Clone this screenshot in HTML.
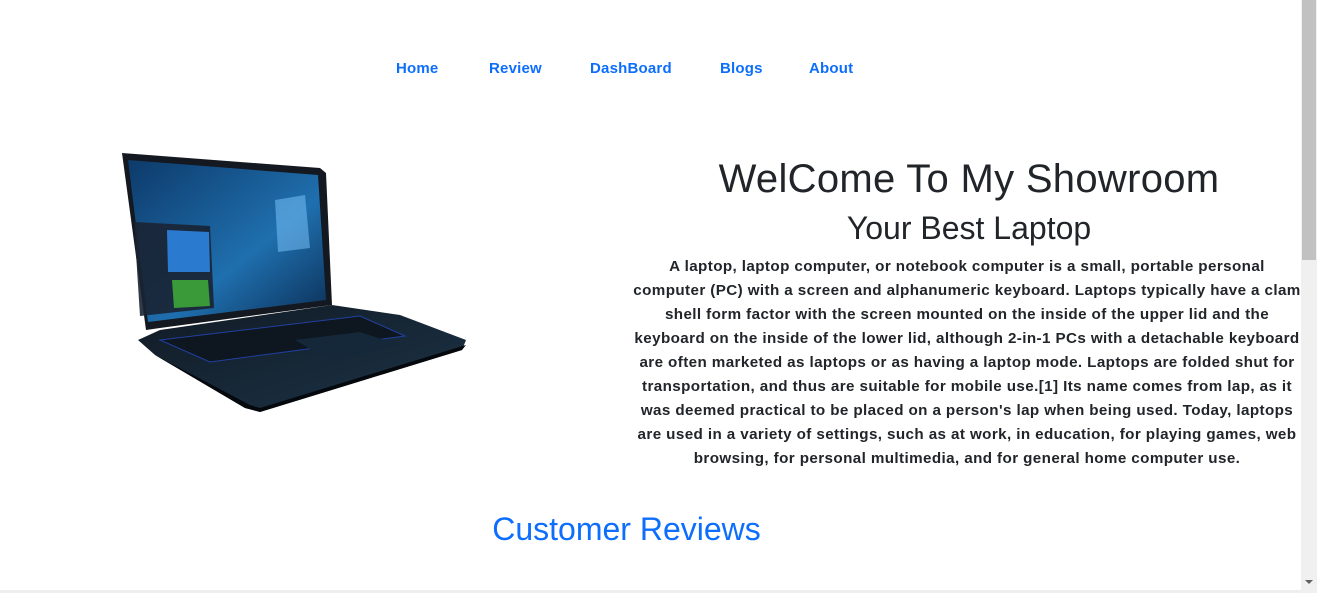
<!DOCTYPE html>
<html><head><style>
html,body{margin:0;padding:0;}
body{width:1317px;height:593px;overflow:hidden;background:#fff;font-family:"Liberation Sans",sans-serif;position:relative;}
.nav{position:absolute;top:60px;left:0;width:1301px;text-align:center;font-weight:bold;font-size:15px;letter-spacing:0.2px;}
.nav a{color:#0d6efd;text-decoration:none;position:absolute;top:0;}
h1{position:absolute;margin:0;left:640px;width:658px;text-align:center;top:157px;font-size:40px;font-weight:normal;color:#212529;letter-spacing:0.3px;}
h2{position:absolute;margin:0;left:640px;width:658px;text-align:center;top:210px;font-size:32px;font-weight:normal;color:#212529;}
p{position:absolute;margin:0;left:632px;width:670px;top:255px;text-align:center;font-weight:bold;font-size:15.2px;line-height:24px;color:#212529;letter-spacing:0.4px;}
.cr{position:absolute;left:0;width:1253px;text-align:center;top:511px;font-size:32px;color:#0d6efd;}
.sb{position:absolute;left:1301px;top:0;width:16px;height:593px;background:#f0f0f0;}
.th{position:absolute;left:1302px;top:0;width:14px;height:260px;background:#c1c1c1;}
.bb{position:absolute;left:0;top:590px;width:1301px;height:3px;background:#eee;}
</style></head><body>
<div class="nav">
<a style="left:396px">Home</a><a style="left:489px">Review</a><a style="left:590px">DashBoard</a><a style="left:720px">Blogs</a><a style="left:809px">About</a>
</div>
<svg style="position:absolute;left:100px;top:140px" width="400" height="290" viewBox="0 0 400 290">
<defs><linearGradient id="s" x1="0" y1="0" x2="1" y2="1"><stop offset="0" stop-color="#0d3a6a"/><stop offset="0.6" stop-color="#1f6fae"/><stop offset="1" stop-color="#0b2e55"/></linearGradient>
<linearGradient id="k" x1="0" y1="0" x2="1" y2="1"><stop offset="0" stop-color="#111a24"/><stop offset="1" stop-color="#1c3448"/></linearGradient></defs>
<polygon points="22,13 220,28 226,33 232,165 60,188 46,190" fill="#141820"/>
<polygon points="28,20 218,35 226,160 48,182" fill="url(#s)"/>
<polygon points="34,82 110,86 114,168 40,176" fill="#1a2433" opacity="0.9"/>
<polygon points="67,90 109,92 110,132 68,132" fill="#2a7ad0"/>
<polygon points="72,140 108,140 110,166 74,168" fill="#3a9a3a"/>
<polygon points="175,60 205,55 210,108 178,112" fill="#7fc8ff" opacity="0.5"/>
<polygon points="60,190 232,165 300,175 366,200 362,210 160,272 145,268 55,215 38,200" fill="url(#k)"/>
<polygon points="60,200 260,176 305,196 110,222" fill="#0e1620" stroke="#2040a0" stroke-width="1"/>
<polygon points="195,200 260,192 300,205 232,222" fill="#14283a"/>
<polygon points="55,215 145,268 160,272 362,210 366,205 160,268 150,265" fill="#05080c"/>
</svg>
<h1>WelCome To My Showroom</h1>
<h2>Your Best Laptop</h2>
<p>A laptop, laptop computer, or notebook computer is a small, portable personal computer (PC) with a screen and alphanumeric keyboard. Laptops typically have a clam shell form factor with the screen mounted on the inside of the upper lid and the keyboard on the inside of the lower lid, although 2-in-1 PCs with a detachable keyboard are often marketed as laptops or as having a laptop mode. Laptops are folded shut for transportation, and thus are suitable for mobile use.[1] Its name comes from lap, as it was deemed practical to be placed on a person's lap when being used. Today, laptops are used in a variety of settings, such as at work, in education, for playing games, web browsing, for personal multimedia, and for general home computer use.</p>
<div class="cr">Customer Reviews</div>
<div class="bb"></div>
<div class="sb"></div><div class="th"></div>
<div style="position:absolute;left:1305px;top:580px;width:0;height:0;border-left:4px solid transparent;border-right:4px solid transparent;border-top:4px solid #606060"></div>
</body></html>
